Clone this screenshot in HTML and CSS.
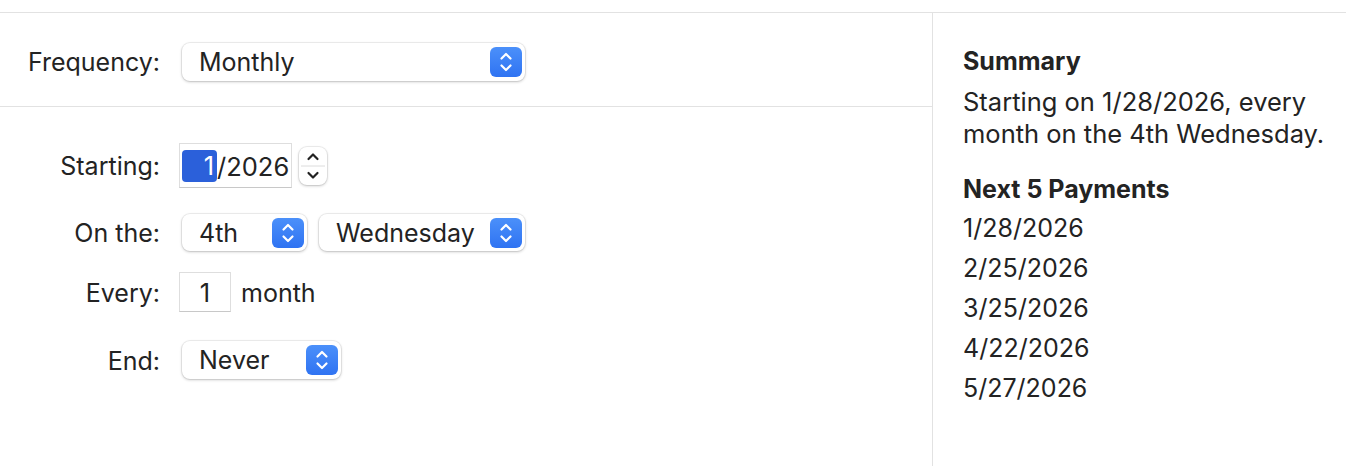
FILE: index.html
```html
<!DOCTYPE html>
<html>
<head>
<meta charset="utf-8">
<link rel="stylesheet" href="styles.css">
</head>
<body>
<div class="topbar"></div>
<div class="main">
  <div class="left">
    <div class="freq">
      <div class="row r-freq">
        <div class="label">Frequency:</div>
        <div class="popup p-freq">
          <span class="ptext">Monthly</span>
          <span class="arrows"><svg width="32" height="30" viewBox="0 0 32 30"><path d="M11.5 11.5 L16 7 L20.5 11.5 M11.5 18.5 L16 23 L20.5 18.5" fill="none" stroke="#fff" stroke-width="2.2" stroke-linecap="round" stroke-linejoin="round"/></svg></span>
        </div>
      </div>
    </div>
    <div class="form">
      <div class="row r-start">
        <div class="label">Starting:</div>
        <div class="field datefield"><span class="sel">1</span>/2026</div>
        <div class="stepper">
          <svg width="28" height="38" viewBox="0 0 28 38"><path d="M9.5 12 L14 7.5 L18.5 12" fill="none" stroke="#222" stroke-width="2.2" stroke-linecap="round" stroke-linejoin="round"/><line x1="2" y1="19" x2="26" y2="19" stroke="#dcdcdc" stroke-width="1"/><path d="M9.5 26 L14 30.5 L18.5 26" fill="none" stroke="#222" stroke-width="2.2" stroke-linecap="round" stroke-linejoin="round"/></svg>
        </div>
      </div>
      <div class="row r-on">
        <div class="label">On the:</div>
        <div class="popup p-4th">
          <span class="ptext">4th</span>
          <span class="arrows"><svg width="32" height="30" viewBox="0 0 32 30"><path d="M11.5 11.5 L16 7 L20.5 11.5 M11.5 18.5 L16 23 L20.5 18.5" fill="none" stroke="#fff" stroke-width="2.2" stroke-linecap="round" stroke-linejoin="round"/></svg></span>
        </div>
        <div class="popup p-wed">
          <span class="ptext">Wednesday</span>
          <span class="arrows"><svg width="32" height="30" viewBox="0 0 32 30"><path d="M11.5 11.5 L16 7 L20.5 11.5 M11.5 18.5 L16 23 L20.5 18.5" fill="none" stroke="#fff" stroke-width="2.2" stroke-linecap="round" stroke-linejoin="round"/></svg></span>
        </div>
      </div>
      <div class="row r-every">
        <div class="label">Every:</div>
        <div class="field numfield">1</div>
        <div class="unit">month</div>
      </div>
      <div class="row r-end">
        <div class="label">End:</div>
        <div class="popup p-end">
          <span class="ptext">Never</span>
          <span class="arrows"><svg width="32" height="30" viewBox="0 0 32 30"><path d="M11.5 11.5 L16 7 L20.5 11.5 M11.5 18.5 L16 23 L20.5 18.5" fill="none" stroke="#fff" stroke-width="2.2" stroke-linecap="round" stroke-linejoin="round"/></svg></span>
        </div>
      </div>
    </div>
  </div>
  <div class="right">
    <div class="heading h-summary">Summary</div>
    <div class="summary">Starting on 1/28/2026, every month on the 4th Wednesday.</div>
    <div class="heading h-next">Next 5 Payments</div>
    <div class="dates">
      <div class="date">1/28/2026</div>
      <div class="date">2/25/2026</div>
      <div class="date">3/25/2026</div>
      <div class="date">4/22/2026</div>
      <div class="date">5/27/2026</div>
    </div>
  </div>
</div>
</body>
</html>
```

FILE: styles.css
```css
html, body {
  margin: 0;
  padding: 0;
  background: #ffffff;
}
body {
  font-family: Inter, "Noto Sans", "Liberation Sans", sans-serif;
  color: #232323;
  width: 1346px;
  height: 466px;
  overflow: hidden;
}
.topbar {
  height: 12px;
  border-bottom: 1px solid #e2e2e2;
}
.main {
  display: flex;
  height: 453px;
}
.left {
  width: 932px;
  border-right: 1px solid #e2e2e2;
  flex: none;
}
.freq {
  height: 94px;
  box-sizing: border-box;
  padding-top: 30px;
  border-bottom: 1px solid #e2e2e2;
}
.row {
  display: flex;
  align-items: center;
}
.label {
  width: 160px;
  flex: none;
  text-align: right;
  font-size: 25px;
  margin-right: 19px;
  padding-top: 1px;
}
.r-freq .label {
  padding-top: 0;
}
.popup {
  margin-left: 3px;
  height: 38px;
  box-sizing: border-box;
  background: #fff;
  border-radius: 8px;
  box-shadow: 0 0 0 1px rgba(0,0,0,0.06), 0 1px 3px rgba(0,0,0,0.22);
  display: flex;
  align-items: center;
  justify-content: space-between;
  padding-left: 17px;
  padding-right: 3px;
  font-size: 25px;
}
.arrows {
  width: 32px;
  height: 30px;
  border-radius: 6px;
  background: linear-gradient(#4b90fa, #2f73f2);
  display: flex;
}
.p-freq { width: 343px; }
.p-4th { width: 125px; }
.p-wed { width: 206px; margin-left: 12px; }
.p-end { width: 159px; }

.form {
  padding-top: 36px;
}
.field {
  background: #fff;
  box-sizing: border-box;
  border: 1px solid #dedede;
  border-bottom-color: #c8c8c8;
  font-size: 25.5px;
  display: flex;
  align-items: center;
}
.datefield {
  width: 113px;
  height: 45px;
  padding-left: 2px;
  padding-top: 1px;
}
.sel {
  display: inline-block;
  width: 35px;
  height: 32px;
  line-height: 32px;
  text-align: right;
  padding-right: 3px;
  box-sizing: border-box;
  background: #2b60da;
  color: #fff;
  border-radius: 4px;
}
.stepper {
  margin-left: 7px;
  width: 28px;
  height: 38px;
  border-radius: 8px;
  background: #fff;
  box-shadow: 0 0 0 1px rgba(0,0,0,0.06), 0 1px 3px rgba(0,0,0,0.22);
  display: flex;
}
.r-start { height: 45px; }
.r-on { height: 39px; margin-top: 25px; }
.r-every { height: 40px; margin-top: 20px; }
.r-end { height: 38px; margin-top: 29px; }
.r-on .popup { height: 37px; }
.numfield {
  width: 52px;
  height: 40px;
  justify-content: center;
  padding-top: 1px;
}
.unit {
  margin-left: 10px;
  font-size: 25px;
  padding-top: 1px;
}

.right {
  flex: 1;
  padding-left: 30px;
  padding-top: 32px;
}
.heading {
  font-weight: 700;
  font-size: 25px;
  line-height: 32px;
}
.summary {
  font-size: 25.5px;
  line-height: 31.5px;
  width: 380px;
  margin-top: 9px;
}
.h-next {
  margin-top: 24px;
}
.dates {
  margin-top: 3px;
}
.date {
  font-size: 25px;
  line-height: 40px;
}
```
